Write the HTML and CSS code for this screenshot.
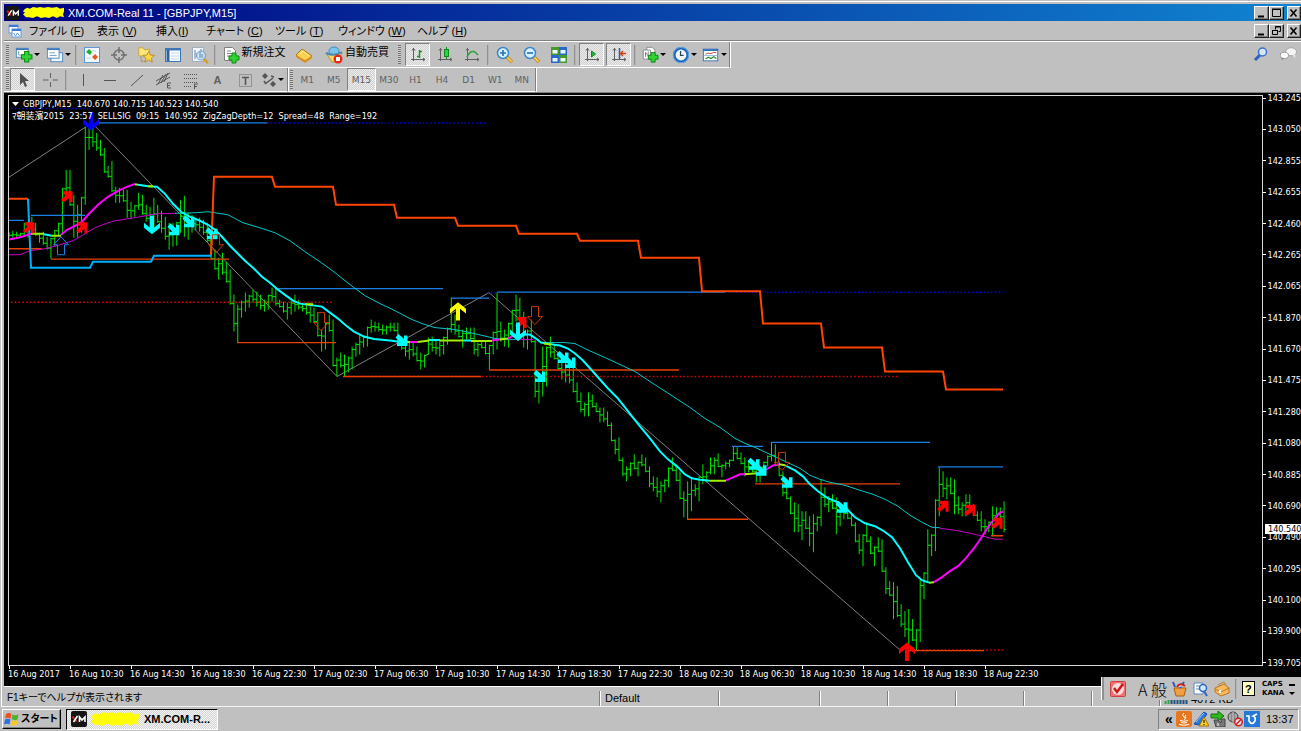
FILE: index.html
```html
<!DOCTYPE html>
<html lang="ja">
<head>
<meta charset="utf-8">
<title>XM.COM-Real 11 - [GBPJPY,M15]</title>
<link rel="stylesheet" href="styles.css">
</head>
<body>
<svg class="defs" width="0" height="0" aria-hidden="true">
  <defs>
    <symbol id="xm" viewBox="0 0 16 16"><rect x="0" y="0" width="16" height="16" rx="2" fill="#151515"/><path d="M1.500 5.500l4 5" stroke="#e02020" stroke-width="2"/><path d="M6.500 5L2.500 11M8.500 11V6l2.500 3 3-3v5" stroke="#fff" stroke-width="1.600" fill="none"/></symbol>
    <symbol id="scribble" viewBox="0 0 42 14" preserveAspectRatio="none"><path d="M1 4l3-2 3 1 3-2 4 1 3-1 4 1 4-1 4 1 5-1 3 2 4-1v4l-1 3 1 3-4-1-3 2-4-2-4 2-4-1-4 1-4-2-4 2-4-1-3 0-3-3 2-2-2-1z" fill="#ff0"/></symbol>
    <symbol id="plus" viewBox="0 0 12 12"><path d="M4 1h4v3h3v4H8v3H4V8H1V4h3z" fill="#2fd42f" stroke="#0a8a14"/></symbol>
    <symbol id="axes" viewBox="0 0 16 16"><path d="M3.500 1v13M1 12.500h14M2 3.500l1.500-2 1.500 2M13 11l2 1.500-2 1.500" stroke="#606060" fill="none"/></symbol>
    <symbol id="lens" viewBox="0 0 18 18"><path d="M11 11l5 5" stroke="#c89020" stroke-width="3.500"/><path d="M11 11l4.500 4.500" stroke="#ffd860" stroke-width="1.500"/><circle cx="7" cy="7" r="5.500" fill="#d8f0ff" stroke="#3c86c8" stroke-width="1.500"/></symbol>
  </defs>
</svg>

<div class="window">
  <header class="titlebar">
    <svg class="i14"><use href="#xm"/></svg>
    <svg class="mask"><use href="#scribble"/></svg>
    <h1 class="title">XM.COM-Real 11 - [GBPJPY,M15]</h1>
    <div class="winbtns">
      <button aria-label="最小化"><svg class="glyph" viewBox="0 0 10 10"><path d="M1 8.500h6" stroke="#000" stroke-width="2"/></svg></button>
      <button aria-label="最大化"><svg class="glyph" viewBox="0 0 10 10"><path d="M.5 1.500h8v7h-8zM0 1h9" stroke="#000" fill="none"/></svg></button>
      <button aria-label="閉じる"><svg class="glyph" viewBox="0 0 10 10"><path d="M1.500 1.500l6 7m0-7l-6 7" stroke="#000" stroke-width="1.600"/></svg></button>
    </div>
  </header>

  <nav class="menubar">
    <svg class="i14 menuicon" viewBox="0 0 14 14"><rect x="1" y="1" width="9" height="8" fill="#fff" stroke="#6a9ae0"/><path d="M1 2h9" stroke="#3c78d8" stroke-width="2"/><rect x="4" y="5" width="9" height="8" fill="#fff" stroke="#6a9ae0"/><path d="M4 6h9" stroke="#3c78d8" stroke-width="2"/><path d="M5.500 9l2 3 2-3 2 3" stroke="#5aa0f0" fill="none"/></svg>
    <div class="menus">
      <button>ファイル (<u>F</u>)</button><button>表示 (<u>V</u>)</button><button>挿入(<u>I</u>)</button><button>チャート (<u>C</u>)</button><button>ツール (<u>T</u>)</button><button>ウィンドウ (<u>W</u>)</button><button>ヘルプ (<u>H</u>)</button>
    </div>
    <div class="winbtns">
      <button aria-label="チャートを最小化"><svg class="glyph" viewBox="0 0 10 10"><path d="M1 8.500h6" stroke="#000" stroke-width="2"/></svg></button>
      <button aria-label="元に戻す"><svg class="glyph" viewBox="0 0 10 10"><path d="M3.500 3.500v-3h5v5h-2M3 1h6M.5 4.500h5v4h-5zM0 4.500h6" stroke="#000" fill="none"/></svg></button>
      <button aria-label="チャートを閉じる"><svg class="glyph" viewBox="0 0 10 10"><path d="M1.500 1.500l6 7m0-7l-6 7" stroke="#000" stroke-width="1.600"/></svg></button>
    </div>
  </nav>

  <div class="row row1">
    <div class="toolbar bar1">
      <i class="grip"></i>
      <button class="tool drop" aria-label="新規チャート"><svg class="i20" viewBox="0 0 20 20"><rect x="1.500" y="2.500" width="13" height="10" fill="#fff" stroke="#4a86c0"/><path d="M1 3.500h14" stroke="#3c78c0" stroke-width="2"/><path d="M4 10V6M3 7l1-1 1 1M4 10h7" stroke="#7aa" fill="none"/><use href="#plus" x="6" y="5" width="14" height="14"/></svg></button>
      <button class="tool drop" aria-label="プロファイル"><svg class="i20" viewBox="0 0 20 20"><rect x="5.500" y="7.500" width="13" height="10" fill="#e8f4ff" stroke="#4a86c0"/><rect x="1.500" y="2.500" width="13" height="11" fill="#fff" stroke="#4a86c0"/><path d="M1 3.500h14" stroke="#3c78c0" stroke-width="2"/><path d="M4 7.500h6M4 10.500h8" stroke="#6a98c8"/></svg></button>
      <i class="sep tight"></i>
      <button class="tool" aria-label="気配値表示"><svg class="i18" viewBox="0 0 18 18"><rect x="1.500" y="1.500" width="15" height="15" fill="#f4faff" stroke="#5a9ad8"/><path d="M6 3l3 3-2 3-4-3z" fill="#1cae28"/><path d="M12 8l3 3-3 3-3-3z" fill="#e85818"/><path d="M9 5h4M4 12h4" stroke="#b8cce0"/></svg></button>
      <button class="tool" aria-label="データウィンドウ"><svg class="i18" viewBox="0 0 18 18"><circle cx="9" cy="9" r="5" fill="none" stroke="#707070" stroke-width="1.500"/><path d="M9 1v6M9 11v6M1 9h6M11 9h6" stroke="#707070" stroke-width="1.500"/></svg></button>
      <button class="tool" aria-label="ナビゲーター"><svg class="i20" viewBox="0 0 20 20"><path d="M2 2h5l1 2h6v7H2z" fill="#ffe680" stroke="#c8a030"/><path d="M4.500 12v5h5" stroke="#806020" stroke-dasharray="1 1" fill="none"/><path d="M13 6l2 4 4.500.5-3.500 3 1 4.500-4-2.500L9 18l1-4.500-3.500-3L11 10z" fill="#ffd848" stroke="#b88820"/></svg></button>
      <button class="tool" aria-label="ターミナル"><svg class="i18" viewBox="0 0 18 18"><rect x="1.500" y="2.500" width="15" height="13" fill="#fff" stroke="#3c78b8"/><path d="M2 3.500h14" stroke="#3c78b8" stroke-width="2"/><path d="M4 4v11" stroke="#2a62a8" stroke-width="3"/><path d="M7 7h8M7 10h8M7 13h8" stroke="#b8d8f8"/></svg></button>
      <button class="tool" aria-label="ストラテジーテスター"><svg class="i18" viewBox="0 0 18 18"><rect x="1.500" y="1.500" width="11" height="14" fill="#f4f8fc" stroke="#a0b0c0"/><path d="M4 4v9M6 7v4M10 3v4" stroke="#6080a0"/><path d="M13 13l4 4" stroke="#d8a020" stroke-width="2.500"/><circle cx="10" cy="9.500" r="4.500" fill="#c8e4f8" fill-opacity=".85" stroke="#6a9cc8"/><path d="M9 6v6M11 8v4" stroke="#6080a0"/></svg></button>
      <i class="sep tight"></i>
      <button class="tool label neworder"><svg class="i18" viewBox="0 0 18 18"><path d="M2.500 1.500h8l3 3v10h-11z" fill="#fff" stroke="#808080"/><path d="M5 5h4M5 7.500h6M5 10h6" stroke="#888"/><use href="#plus" x="6" y="6" width="12" height="12"/></svg><span>新規注文</span></button>
      <button class="tool" aria-label="MetaEditor"><svg class="i18" viewBox="0 0 18 18"><path d="M1 9l6-6 10 7-7 6z" fill="#ffd050" stroke="#b07810"/><path d="M1 9l9 5 7-4v2l-7 5-9-6z" fill="#d89020"/><path d="M5 8l3-3 6 5" stroke="#fff0a0" fill="none"/></svg></button>
      <button class="tool label auto"><svg class="i18" viewBox="0 0 18 18"><ellipse cx="9" cy="5" rx="5" ry="4" fill="#7cc4ee" stroke="#3c8cc0"/><path d="M1 7q8 3 16 0l-5 9H7z" fill="#ffd860" stroke="#c09020"/><path d="M1 7q8 4 16-1" stroke="#3c8cc0" stroke-width="2" fill="none"/><circle cx="13" cy="13" r="4.500" fill="#e82818"/><rect x="11" y="11" width="4" height="4" fill="#fff"/></svg><span>自動売買</span></button>
      <i class="grip"></i>
      <button class="tool on" aria-label="バーチャート"><svg class="i16"><use href="#axes"/><path d="M9.500 3v8M7 9.500h2M10 4.500h2" stroke="#109820" stroke-width="1.500"/></svg></button>
      <button class="tool" aria-label="ローソク足"><svg class="i16"><use href="#axes"/><path d="M9.500 0v12" stroke="#108820"/><rect x="7.500" y="2.500" width="4" height="7" fill="#20d840" stroke="#108820"/></svg></button>
      <button class="tool" aria-label="ラインチャート"><svg class="i16"><use href="#axes"/><path d="M3 10q5-10 11-2" stroke="#30a040" stroke-width="1.500" fill="none"/></svg></button>
      <i class="sep"></i>
      <button class="tool" aria-label="ズームイン"><svg class="i18"><use href="#lens"/><path d="M4 7h6M7 4v6" stroke="#2870b8" stroke-width="1.600"/></svg></button>
      <button class="tool" aria-label="ズームアウト"><svg class="i18"><use href="#lens"/><path d="M4 7h6" stroke="#2870b8" stroke-width="1.600"/></svg></button>
      <button class="tool" aria-label="整列"><svg class="i18" viewBox="0 0 18 18"><path d="M1 1h8v8H1zM9 9h8v8H9z" fill="#48982c"/><path d="M9 1h8v8H9zM1 9h8v8H1z" fill="#2868c8"/><path d="M2.500 4h5v3.500h-5zM10.500 4h5v3.500h-5zM2.500 12h5v3.500h-5zM10.500 12h5v3.500h-5z" fill="#eef6ff"/></svg></button>
      <i class="sep"></i>
      <button class="tool on" aria-label="自動スクロール"><svg class="i16"><use href="#axes"/><path d="M7.500 4l4 3-4 3z" fill="#20b838" stroke="#108820"/></svg></button>
      <button class="tool on" aria-label="チャートシフト"><svg class="i16"><use href="#axes"/><path d="M8.500 1v11" stroke="#2060b0" stroke-width="1.500"/><path d="M15 6.500h-5M12 4l-2.500 2.500L12 9" stroke="#d04010" fill="none" stroke-width="1.500"/></svg></button>
      <i class="sep"></i>
      <button class="tool drop" aria-label="インディケータ"><svg class="i20" viewBox="0 0 20 20"><path d="M6.500 1.500h6l3 3v9h-9z" fill="#fff" stroke="#888"/><path d="M2.500 4.500h8v10h-8z" fill="#fff" stroke="#888"/><path d="M5 7v5M5 7l3 4M8 6v6" stroke="#777"/><use href="#plus" x="7" y="6" width="13" height="13"/></svg></button>
      <button class="tool drop" aria-label="時間設定"><svg class="i20" viewBox="0 0 20 20"><circle cx="10" cy="10" r="7.500" fill="#eef8ff" stroke="#1c66c0" stroke-width="3"/><circle cx="10" cy="10" r="8.500" fill="none" stroke="#60a8e8"/><path d="M9.500 5.500V10.500H13" stroke="#345" stroke-width="1.400" fill="none"/></svg></button>
      <button class="tool drop" aria-label="テンプレート"><svg class="i20" viewBox="0 0 20 20"><rect x="1.500" y="3.500" width="16" height="13" fill="#fff" stroke="#2c70b8"/><path d="M1 4.500h17" stroke="#2c70b8" stroke-width="2"/><path d="M2 10.500h15" stroke="#88b8e0"/><path d="M4 9l3-1 3 .5 3-1.500 3 .5" stroke="#c04020" fill="none"/><path d="M4 14.500l3-2 3 1.500 3-2 3 2" stroke="#209030" fill="none" stroke-width="1.300"/></svg></button>
    </div>
    <div class="rowend">
      <button class="tool" aria-label="検索"><svg class="i16" viewBox="0 0 16 16"><path d="M7 9l-5 5" stroke="#2c60c0" stroke-width="3"/><circle cx="9.500" cy="6" r="4" fill="#d8e8fc" stroke="#3c70d0" stroke-width="1.500"/></svg></button>
      <button class="tool" aria-label="チャット"><svg class="i20" viewBox="0 0 20 20"><ellipse cx="13.500" cy="7.500" rx="6" ry="4.500" fill="#f4f4f4" stroke="#a0a0a0"/><path d="M15 11l3 4v-5z" fill="#e8e8e8"/><ellipse cx="6" cy="11.500" rx="4.500" ry="3.500" fill="#fff" stroke="#909090"/><path d="M3 14v3l3-2z" fill="#888"/></svg></button>
    </div>
  </div>

  <div class="row row2">
    <div class="toolbar bar2">
      <i class="grip"></i>
      <button class="tool on" aria-label="カーソル"><svg class="i16" viewBox="0 0 16 16"><path d="M5 1v12l3-3 2 5 2-1-2-5h4z" fill="#505050"/></svg></button>
      <button class="tool" aria-label="十字カーソル"><svg class="i16" viewBox="0 0 16 16"><path d="M8.500 1v5M8.500 10v5M1 8h5.500M10.500 8H16" stroke="#606060"/></svg></button>
      <i class="sep"></i>
      <button class="tool" aria-label="垂直線"><svg class="i16" viewBox="0 0 16 16"><path d="M8.500 2v12" stroke="#555"/></svg></button>
      <button class="tool" aria-label="水平線"><svg class="i16" viewBox="0 0 16 16"><path d="M2 8.500h12" stroke="#555"/></svg></button>
      <button class="tool" aria-label="トレンドライン"><svg class="i16" viewBox="0 0 16 16"><path d="M2 14L14 3" stroke="#555"/></svg></button>
      <button class="tool" aria-label="チャネル"><svg class="i18" viewBox="0 0 18 18"><path d="M1 10L15 2M1 14L15 6M3 13L8 4M6 12l5-9M9 11l4-9" stroke="#555"/><path d="M16 12h-3.500v5H16M12.500 14.500H15" stroke="#555" fill="none"/></svg></button>
      <button class="tool" aria-label="フィボナッチ"><svg class="i18" viewBox="0 0 18 18"><path d="M2 3.500h14M2 7.500h14M2 11.500h14" stroke="#555" stroke-dasharray="1 1"/><path d="M2 15.500h8" stroke="#555" stroke-dasharray="1 1"/><path d="M16 13h-3.500v5M12.500 15.500H15" stroke="#555" fill="none"/></svg></button>
      <button class="tool letter" aria-label="テキスト">A</button>
      <button class="tool" aria-label="テキストラベル"><svg class="i16" viewBox="0 0 16 16"><rect x="2.500" y="2.500" width="12" height="12" fill="none" stroke="#666" stroke-dasharray="1 1"/><path d="M5 5.500h7M8.500 5v8" stroke="#555" stroke-width="1.600"/></svg></button>
      <button class="tool drop" aria-label="矢印"><svg class="i16" viewBox="0 0 16 16"><path d="M4 1l3 3-3 3-3-3zM12 9l3 3-3 3-3-3z" fill="#555"/><path d="M4 12l8-6M3 9l2 3M10 4l3 1" stroke="#555" stroke-width="1.500"/></svg></button>
    </div>
    <div class="toolbar bar3">
      <i class="grip"></i>
      <button>M1</button><button>M5</button><button class="on">M15</button><button>M30</button><button>H1</button><button>H4</button><button>D1</button><button>W1</button><button>MN</button>
    </div>
  </div>

  <main class="chart">
    <section class="plot">
      <svg class="canvas" viewBox="9 96 1253 570" preserveAspectRatio="none" role="img" aria-label="GBPJPY,M15">
        <defs>
          <path id="down" d="M-2-17H2V-5L8-10V-5L0 1.500L-8-5V-10L-2-5Z"/>
          <path id="up" d="M-2 17H2V5L8 10V5L0-1.500L-8 5V10L-2 5Z"/>
          <path id="ne" d="M-4-5.500H5.500V5.500H2.500V1L-3 5.500L-6 3L-1-2H-4Z"/>
          <path id="se" d="M-3.500-6.500L2-1.500V-5H5.500V5.500H-5V2H-1.500L-6.500-3Z"/>
          <path id="hollow" d="M-3.500-18H3.500V-8H7.500L0 0L-7.500-8H-3.500Z"/>
        </defs>
        <g class="zig"><polyline points="8,178 92,123 337,377 489,293 900,651"/></g>
        <path id="bars" class="bars"/>
        <path class="dot blue" d="M11 108.500H89M267 123H487M487 293H497M725 292.500H1003"/>
        <path class="dot red" d="M11 302.500H333M345 377H898M918 651H1003"/>
        <path class="res" d="M8 220.500H24M31 215.500H85M97 123H267M277 289H443M451 298.500H489M497 292.500H725M732 447H763M771 443H930M938 467.500H1003"/>
        <path class="sup" d="M8 249H42M51 259.500H229M237 343H336M343 377H481M489 370.500H679M687 520H748M755 484.500H900M908 651.500H984M991 536.500H1003"/>
        <path class="slow mg" d="M8 255L20 255 30 251 45 249 60 245 73 241 85 234 95 228 105 224 115 221 128 219 140 217 150 215 158 214 175 213.500M515 340H533M940 529L955 531 970 534 983 537 995 540 1003 540"/>
        <path class="slow cy" d="M175 213.500L195 213 208 212 215 213 228 215 243 223 260 228 275 233 290 241 305 252 320 262 335 273 350 285 365 296 380 304 395 311 410 319 422 324 435 328 455 330 470 333 483 336 495 339 515 340M541 343L565 343 575 344 587 350 605 358 620 365 635 372 650 382 670 395 690 408 705 419 720 428 735 439 745 444 755 448 770 455 785 462 800 469 810 476 820 480 830 483 845 486 860 491 873 495 885 500 898 507 910 516 922 523 932 528 940 528.500"/>
        <path class="step or" d="M8 199H28M211 256L214 177H272L275 187H333L336 205H394L397 218H455L458 226H516L519 234H577L580 241H638L641 258H699L702 291.500H760L763 324H821L824 348H882L885 372H943L946 390H1003"/>
        <path class="step bl" d="M28 199L31 268H90L93 262H151L154 256H211"/>
        <path class="fast cy" d="M44 234.500L52 236M138 185L148 186.500 157 187 165 194 173 204 181 212 190 217 200 221 208 225 215 230 222 237 230 246 240 256 245 261 253 268 262 277 270 283 278 290 286 296 293 301 300 304 322 307 338 319 346 326 354 332 364 337 374 339.500 390 341 405 343M429 340.500H440M463 341H471M518 336L524 335 530 335 536 339 541 343 553 345 560 346 568 349 575 354 583 361 592 371 600 380 608 389 617 398 625 408 632 417 640 427 650 439 660 452 668 460 677 467 685 475 692 479 700 480.500 710 481.500M785 466L795 471 803 477 810 485 818 492 828 499 838 503 846 509 855 518 865 524 875 527 884 532 892 538 900 549 908 563 916 576 922 581 929 583.500"/>
        <path class="fast mg" d="M8 240L18 238 25 236 31 234M61 235L67 230 73 227 82 222 90 213 98 205 108 197 118 191 127 187 135 184M410 342.500H418M492 341L500 340M508 339L515 335M726 481L733 478 740 475 745 475M757 474L765 471 773 466 779 465M934 583L942 578 950 572 958 567 966 559 974 549 981 539 988 528 994 520 999 514 1003 512"/>
        <path class="fast gr" d="M31 234H44M52 236H61M135 184.500L138 185M148 186.500H153M305 304.500H313M404 342.500H410M418 342.500L429 341M440 341H463M471 341.500H492M500 340L508 339M544 344L551 345M710 481.500H726M745 475L757 474M779 465L785 466M929 583.500L934 583"/>
        <g fill="#0000ff"><use href="#down" x="91" y="129"/></g>
        <g fill="#ffff00"><use href="#up" x="458" y="304"/></g>
        <g fill="#ff0000">
          <use href="#up" x="907" y="645"/>
          <use href="#ne" x="29" y="228"/><use href="#ne" x="67" y="197"/><use href="#ne" x="82" y="228"/><use href="#ne" x="521" y="323"/><use href="#ne" x="943" y="507"/><use href="#ne" x="970" y="511"/><use href="#ne" x="997" y="524"/>
        </g>
        <g fill="#00ffff">
          <use href="#down" x="152" y="233"/><use href="#down" x="518" y="340"/>
          <use href="#se" x="174" y="230"/><use href="#se" x="189" y="222"/><use href="#se" x="212" y="234"/><use href="#se" x="402" y="341"/><use href="#se" x="540" y="377"/><use href="#se" x="563" y="358"/><use href="#se" x="570" y="363"/><use href="#se" x="754" y="465"/><use href="#se" x="761" y="471"/><use href="#se" x="787" y="483"/><use href="#se" x="842" y="508"/>
        </g>
        <g class="open"><use href="#hollow" x="216" y="253"/><use href="#hollow" x="321" y="331"/><use href="#hollow" x="535" y="325"/><use href="#hollow" x="782" y="471"/></g>
        <g class="openup"><use href="#hollow" transform="translate(61 237) scale(1 -1)"/></g>
      </svg>
      <div class="caption">
        <p><svg class="tri" viewBox="0 0 7 4"><path d="M0 0h7L3.500 4z" fill="#fff"/></svg>GBPJPY,M15&nbsp; 140.670 140.715 140.523 140.540</p>
        <p class="signal">ﾏ朝装濱2015&nbsp; 23:57&nbsp; SELLSIG&nbsp; 09:15&nbsp; 140.952&nbsp; ZigZagDepth=12&nbsp; Spread=48&nbsp; Range=192</p>
      </div>
    </section>
    <ol class="prices">
      <li>143.245</li><li>143.050</li><li>142.855</li><li>142.655</li><li>142.460</li><li>142.265</li><li>142.065</li><li>141.870</li><li>141.670</li><li>141.475</li><li>141.280</li><li>141.080</li><li>140.885</li><li>140.690</li><li>140.490</li><li>140.295</li><li>140.100</li><li>139.900</li><li>139.705</li>
      <li class="last">140.540</li>
    </ol>
    <ol class="times">
      <li>16 Aug 2017</li><li>16 Aug 10:30</li><li>16 Aug 14:30</li><li>16 Aug 18:30</li><li>16 Aug 22:30</li><li>17 Aug 02:30</li><li>17 Aug 06:30</li><li>17 Aug 10:30</li><li>17 Aug 14:30</li><li>17 Aug 18:30</li><li>17 Aug 22:30</li><li>18 Aug 02:30</li><li>18 Aug 06:30</li><li>18 Aug 10:30</li><li>18 Aug 14:30</li><li>18 Aug 18:30</li><li>18 Aug 22:30</li>
    </ol>
  </main>

  <footer class="status">
    <span class="help">F1キーでヘルプが表示されます</span>
    <span class="profile">Default</span>
    <span class="w100"></span><span class="w68"></span><span class="w68"></span><span class="w68"></span><span class="w68"></span><span class="w68"></span>
    <span class="net"><svg class="signalbars" viewBox="0 0 24 10"><path d="M1.500 7v3M4.500 6v4" stroke="#30a050" stroke-width="2"/><path d="M7.500 5v5M10.500 4v6M13.500 3v7M16.500 2v8M19.500 1v9M22.500 0v10" stroke="#205080" stroke-width="2"/></svg>4072 KB</span>
  </footer>
</div>

<div class="taskbar">
  <button class="start"><svg class="i16" viewBox="0 0 16 16"><path d="M2 3q3-2 5.500 0L6.500 7.500Q4 6 1 7.500z" fill="#f05020"/><path d="M8.500 3.500q3 1.500 6 0l-1 5q-3 1.500-6-.5z" fill="#50b030"/><path d="M1 8.500q3-1.500 5.500 0l-1 5Q3 12 0 13.500z" fill="#3070e0"/><path d="M7.500 9q3 1.500 6 .5l-1 4.500q-3 1.500-6-.5z" fill="#f8c820"/></svg>スタート</button>
  <button class="task"><svg class="i16"><use href="#xm"/></svg><svg class="mask big"><use href="#scribble"/></svg><span>XM.COM-R...</span></button>
  <div class="tray">
    <button class="more" aria-label="隠れているアイコン">«</button>
    <svg class="i16" viewBox="0 0 16 16"><rect width="16" height="16" rx="2" fill="#e87820"/><path d="M8 2q-3 2 0 4t0 3M10 4q-2 1 0 3M4 9.500q4 1.500 8 0M5 11.500q3 1 6 0M3 13.500q5 1.500 10 0" stroke="#fff" fill="none"/></svg>
    <svg class="i16" viewBox="0 0 16 16"><path d="M1 13L11 1l3 2L6 14z" fill="#2878e0" stroke="#1048a0"/><path d="M3 11l8-9" stroke="#a0d0ff"/><path d="M11 6l5 9H6z" fill="#ffd020" stroke="#a07000"/><path d="M11 9v3M11 13v1" stroke="#000"/></svg>
    <svg class="i16" viewBox="0 0 16 16"><path d="M1 3h7V0l6 5-6 5V7H1z" fill="#30b820" stroke="#107010"/><path d="M4 9h4l3 3v-4h4v8H6z" fill="#777" stroke="#444"/><path d="M8 15v-3" stroke="#fff"/></svg>
    <svg class="i16" viewBox="0 0 16 16"><circle cx="6" cy="6" r="5" fill="#888" stroke="#444"/><path d="M6 1v10M3 3v6M9 3v6" stroke="#ccc"/><circle cx="11.500" cy="11" r="3.800" fill="#ddd" stroke="#d02020" stroke-width="1.500"/><path d="M9 13.500l5-5" stroke="#d02020" stroke-width="1.500"/></svg>
    <svg class="i16" viewBox="0 0 16 16"><rect width="16" height="16" fill="#2478d8"/><path d="M2 5h3v5q3 5 6 0 1-4-2-5l4-2" stroke="#fff" stroke-width="1.600" fill="none"/></svg>
    <time>13:37</time>
  </div>
</div>

<aside class="langbar">
  <svg class="i16" viewBox="0 0 16 16"><rect x=".5" y=".5" width="15" height="15" rx="1" fill="#f07070" stroke="#d04040"/><circle cx="8" cy="8" r="6" fill="#fbdcdc"/><path d="M4 7l3 4 6-8" stroke="#c81818" stroke-width="2.500" fill="none"/></svg>
  <span class="mode">A 般</span>
  <svg class="i16" viewBox="0 0 16 16"><path d="M2 7h12l-2 8H4z" fill="#f0a040" stroke="#a86010"/><path d="M3 6L1 1M8 7l4-6" stroke="#2858c0" stroke-width="2"/><path d="M5 6q3-5 8-1" stroke="#c02020" stroke-width="2" fill="#fff"/></svg>
  <svg class="i16" viewBox="0 0 16 16"><path d="M1 2h9v11H1z" fill="#fff" stroke="#5a88c8"/><path d="M3 5h4M3 8h4" stroke="#5a88c8"/><circle cx="10" cy="7" r="3.500" fill="#d0e8ff" stroke="#3068b8" stroke-width="1.500"/><path d="M11 10l3 5" stroke="#3068b8" stroke-width="2"/></svg>
  <svg class="i16" viewBox="0 0 16 16"><path d="M1 7l9-4 5 4v5l-8 3-6-4z" fill="#f8b860" stroke="#b87820"/><path d="M1 8l6 3 8-4" stroke="#b87820" fill="none"/><path d="M5 5V3l5-2 2 3" stroke="#c88830" fill="none"/><path d="M6 9v3" stroke="#fff" stroke-width="2"/></svg>
  <i class="sep"></i>
  <button class="qmark" aria-label="ヘルプ">?</button>
  <span class="caps">CAPS<br>KANA</span>
  <svg class="langend" viewBox="0 0 6 16"><path d="M0 4h6" stroke="#000" stroke-width="2"/><path d="M0 11h6l-3 3z"/></svg>
</aside>
<script src="chart.js"></script>
</body>
</html>
```
FILE: styles.css
```css
* { box-sizing: border-box; }
html, body { height: 100%; }
body {
  margin: 0;
  display: flex;
  flex-direction: column;
  background: #c0c0c0;
  color: #000;
  font: 11px/14px "Liberation Sans", "Noto Sans CJK JP", sans-serif;
  font-feature-settings: "palt";
  overflow: hidden;
  position: relative;
}
p, h1, ol { margin: 0; padding: 0; }
ol { list-style: none; }
.defs { position: absolute; }
button {
  appearance: none;
  border: 0;
  padding: 0;
  margin: 0;
  background: none;
  color: inherit;
  font: inherit;
  font-feature-settings: inherit;
  white-space: nowrap;
}
svg { display: block; flex: none; }
.i14 { width: 14px; height: 14px; }
.i16 { width: 16px; height: 16px; }
.i18 { width: 18px; height: 18px; }
.i20 { width: 18px; height: 18px; }

.window {
  flex: 1;
  min-height: 0;
  display: flex;
  flex-direction: column;
  margin-top: 1px;
  margin-left: 1px;
  padding: 2px 0 0 2px;
  border-top: 1px solid #fff;
  border-left: 1px solid #fff;
  border-bottom: 1px solid #f4f4f4;
}
.titlebar {
  height: 17px;
  display: flex;
  align-items: center;
  padding-left: 2px;
  background: linear-gradient(90deg, #000080, #1084d0);
  color: #fff;
}
.mask { width: 42px; height: 13px; margin-left: 3px; }
.title { font-size: 11px; font-weight: 400; margin-left: 3px; flex: 1; }
.winbtns { display: flex; margin-left: auto; }
.winbtns button {
  width: 15px;
  height: 14px;
  background: #c0c0c0;
  border: 1px solid;
  border-color: #fff #202020 #202020 #fff;
  box-shadow: inset -1px -1px #808080;
  display: grid;
  place-items: center;
}
.winbtns button:last-child { margin-left: 3px; width: 14px; }
.glyph { width: 10px; height: 10px; }

.menubar {
  height: 20px;
  display: flex;
  align-items: center;
  border-bottom: 1px solid #808080;
}
.menuicon { margin: 0 7px 0 4px; }
.menus { display: grid; grid-template-columns: 68px 59px 50px 69px 63px 79px auto; }
.menus button { text-align: left; }

.row { display: flex; justify-content: space-between; }
.row1 { height: 27px; border-top: 1px solid #fff; }
.row2 { height: 25px; justify-content: flex-start; border-bottom: 1px solid #808080; }
.toolbar {
  display: flex;
  align-items: center;
  border-right: 1px solid #808080;
  border-bottom: 1px solid #fff;
  box-shadow: 1px 0 #fff;
}
.grip {
  width: 3px;
  height: 19px;
  margin: 0 3px 0 2px;
  flex: none;
  background: repeating-linear-gradient(#707070 0 1px, #d0d0d0 1px 2px);
}
.sep { width: 2px; height: 20px; margin: 0 2px; flex: none; background: #909090; border-right: 1px solid #b4b4b4; }
.sep.tight { margin: 0 1px; }
.tool { width: 27px; height: 23px; display: flex; align-items: center; justify-content: center; flex: none; }
.drop { width: 31px; }
.drop::after { content: ""; border: 3px solid transparent; border-top-color: #000; border-bottom: 0; margin-left: 1px; }
.bar1 .drop:last-child { width: 29px; }
.on {
  border: 1px solid;
  border-color: #808080 #fff #fff #808080;
  background: repeating-conic-gradient(#ececec 0 25%, #d0d0d0 0 50%) 0 0 / 2px 2px;
}
.tool.on { width: 25px; margin: 0 1px; }
.label span { align-self: flex-start; margin: 2px 0 0 2px; }
.neworder { width: 73px; }
.auto { width: 76px; margin: 0 1px 0 2px; }
.rowend { display: flex; }
.letter { font: bold 11px/14px "Liberation Sans", sans-serif; color: #606060; }
.bar2 .grip { margin-right: 0; }
.bar2 .drop { width: 29px; }
.bar3 .grip { margin-right: 1px; }
.bar3 { width: 248px; }
.bar3 button { flex: 1; height: 23px; color: #606060; font: 9px/14px "DejaVu Sans", sans-serif; }

.chart {
  flex: 1;
  min-height: 0;
  display: grid;
  grid-template: minmax(0, 1fr) 18px / minmax(0, 1fr) 38px;
  background: #000;
  color: #fff;
  font: 9px/10px "DejaVu Sans Condensed", "DejaVu Sans", sans-serif;
}
.plot {
  margin: 2px 0 2px 4px;
  border: 1px solid #d8d8d8;
  position: relative;
}
.canvas { width: 100%; height: 100%; overflow: hidden; fill: none; }
.caption { position: absolute; left: 3px; top: 2px; white-space: nowrap; }
.caption p { display: flex; align-items: center; height: 12px; }
.caption .signal { font-family: "DejaVu Sans Condensed", "Noto Sans CJK JP", sans-serif; }
.tri { width: 7px; height: 4px; margin-right: 4px; }
.prices { display: flex; flex-direction: column; justify-content: space-between; position: relative; }
.prices li { display: flex; align-items: center; }
.prices li::before { content: ""; width: 3px; height: 1px; margin-right: 2px; background: #fff; }
.prices .last { position: absolute; left: 2px; right: 0; top: 75%; padding-left: 3px; background: #fff; color: #000; }
.prices .last::before { display: none; }
.times { grid-column: 1; margin-left: 4px; display: grid; grid-template-columns: repeat(17, 4.86%); }
.times li { white-space: nowrap; position: relative; padding-top: 1px; }
.times li::before { content: ""; position: absolute; left: 1px; top: -2px; width: 1px; height: 3px; background: #fff; }

.bars { stroke: #00e800; }
.zig { stroke: #808080; stroke-width: 1; }
.dot { stroke-dasharray: 1.500 2.300; stroke-width: 1.500; }
.dot.blue { stroke: #0000e8; }
.dot.red { stroke: #e80000; }
.res { stroke: #1a80e8; stroke-width: 1.300; }
.sup { stroke: #e84000; stroke-width: 1.300; }
.slow { stroke-width: 1; }
.slow.cy { stroke: #00c8c8; }
.slow.mg { stroke: #c800c8; }
.step { stroke-width: 2; }
.step.or { stroke: #ff4500; }
.step.bl { stroke: #00b0ff; }
.fast { stroke-width: 2; }
.fast.cy { stroke: #00ffff; }
.fast.mg { stroke: #ff00ff; }
.fast.gr { stroke: #a0f000; }
.open { stroke: #c83c00; }
.openup { stroke: #1e80e8; }

.status { height: 20px; display: flex; align-items: stretch; border-top: 1px solid #fff; }
.status span { margin-top: 4px; border-left: 1px solid #808080; box-shadow: inset 1px 0 #fff; }
.status .help { flex: 1; border: 0; box-shadow: none; padding-left: 3px; font-size: 10px; }
.status .profile { width: 119px; padding-left: 5px; }
.status .w100 { width: 101px; }
.status .w68 { width: 68px; }
.status .net { width: 142px; display: flex; align-items: center; padding-left: 4px; gap: 3px; }
.signalbars { width: 24px; height: 10px; }

.taskbar { height: 24px; display: flex; align-items: center; padding: 0 2px; gap: 5px; }
.start {
  width: 59px;
  height: 20px;
  display: flex;
  align-items: center;
  gap: 1px;
  padding-left: 1px;
  font-size: 10px;
  font-weight: 700;
  border: 1px solid;
  border-color: #fff #000 #000 #fff;
  box-shadow: inset -1px -1px #808080;
}
.task {
  width: 152px;
  height: 21px;
  display: flex;
  align-items: center;
  padding-left: 4px;
  font-weight: 700;
  border: 1px solid;
  border-color: #000 #fff #fff #000;
  background: repeating-conic-gradient(#f4f4f4 0 25%, #d4d4d4 0 50%) 0 0 / 2px 2px;
}
.big { width: 49px; height: 16px; margin: 0 4px; }
.tray {
  margin-left: auto;
  width: 141px;
  height: 21px;
  display: flex;
  align-items: center;
  gap: 1px;
  padding-left: 4px;
  border: 1px solid;
  border-color: #808080 #fff #fff #808080;
}
.more { width: 12px; font-size: 14px; font-weight: 700; }
.tray time { margin-left: 5px; }

.langbar {
  position: absolute;
  right: 0;
  bottom: 31px;
  width: 200px;
  height: 23px;
  display: flex;
  align-items: center;
  gap: 5px;
  padding-left: 8px;
  background: #c0c0c0;
  border-left: 1px solid #fff;
  box-shadow: inset 2px 0 #909090;
}
.mode { font: 16px/20px "Noto Sans CJK JP", sans-serif; font-weight: 300; margin-left: 7px; white-space: nowrap; }
.langbar .sep { margin: 0; }
.qmark { width: 13px; height: 15px; background: #ffffc0; border: 1px solid #000; font-weight: 700; }
.caps { font: bold 7px/9px "DejaVu Sans", sans-serif; margin-left: 2px; }
.langend { width: 6px; height: 16px; }
```
FILE: chart.js
```javascript
// High and low of each 15-minute bar, as vertical positions on the canvas.
const bars = [
  232,238, 231,240, 232,238, 233,238, 223,237, 222,238, 217,233, 223,236, 233,243, 232,245,
  237,250, 238,259, 230,246, 223,236, 188,235, 170,200, 170,206, 195,238, 205,238, 197,233,
  127,205, 125,150, 128,147, 133,151, 140,156, 148,173, 166,178, 161,192, 187,203, 188,203,
  190,202, 190,218, 202,219, 205,217, 193,210, 195,215, 205,222, 207,230, 198,232, 205,223,
  211,233, 217,240, 223,250, 223,247, 222,246, 200,233, 196,237, 213,240, 215,233, 218,230,
  218,232, 220,235, 223,242, 233,260, 250,270, 258,280, 253,275, 262,283, 270,305, 295,332,
  305,343, 301,318, 293,312, 295,308, 290,303, 292,307, 295,310, 300,312, 295,310, 288,302,
  288,306, 300,308, 302,313, 303,320, 301,315, 295,312, 300,310, 303,312, 303,315, 303,323,
  308,323, 313,337, 330,352, 323,350, 315,332, 320,367, 358,377, 353,368, 355,377, 357,373,
  347,370, 343,357, 335,355, 337,348, 327,347, 320,333, 322,332, 323,332, 325,335, 326,335,
  323,332, 323,332, 323,342, 337,350, 340,357, 343,360, 343,357, 347,362, 353,370, 355,368,
  338,355, 337,352, 341,355, 340,357, 337,355, 328,345, 298,333, 315,335, 325,338, 330,348,
  328,340, 328,340, 328,355, 343,357, 341,349, 341,355, 345,370, 332,355, 293,350, 322,342,
  330,347, 323,348, 310,337, 295,322, 298,323, 312,348, 330,350, 320,343, 340,398, 380,404,
  347,397, 347,387, 337,358, 345,360, 352,370, 358,380, 362,383, 367,384, 368,393, 383,403,
  393,413, 403,417, 393,417, 395,408, 403,413, 408,423, 408,423, 412,427, 423,442, 440,455,
  438,462, 458,477, 467,482, 463,477, 455,470, 462,477, 455,467, 458,473, 467,488, 477,492,
  478,498, 482,503, 480,493, 468,488, 458,472, 465,482, 472,500, 492,518, 482,520, 478,512,
  485,497, 477,502, 465,485, 472,483, 458,475, 458,475, 454,468, 465,478, 462,470, 460,468,
  447,462, 448,460, 453,465, 458,477, 462,473, 463,473, 465,483, 467,483, 462,474, 456,467,
  443,462, 445,467, 462,477, 472,497, 487,500, 497,515, 503,533, 505,533, 512,541, 512,530,
  517,547, 515,553, 517,532, 480,527, 488,508, 497,513, 495,510, 498,535, 508,527, 503,520,
  508,520, 513,527, 523,543, 535,555, 535,567, 523,543, 537,555, 547,567, 538,553, 540,573,
  568,595, 582,597, 583,620, 587,618, 605,628, 612,638, 610,650, 620,642, 630,652, 580,643,
  573,600, 530,583, 535,557, 500,552, 468,517, 472,498, 478,500, 478,495, 480,515, 497,515,
  503,517, 495,517, 495,512, 505,517, 512,522, 512,532, 520,535, 522,533, 507,537, 508,525,
  508,523, 502,533
];

const START = 9;
const STEP = 61 / 16;
const count = bars.length / 2;
let previousClose = 236;
let path = "";

for (let i = 0; i < count; i++) {
  const x = START + i * STEP;
  const high = bars[2 * i];
  const low = bars[2 * i + 1];
  const next = i + 1 < count ? (bars[2 * i + 2] + bars[2 * i + 3]) / 2 : 530;
  const open = Math.min(Math.max(previousClose, high), low);
  const close = Math.min(Math.max(next, high + 1), low - 1);
  path += `M${x} ${high}V${low}M${x - 2} ${open}H${x}M${x} ${close}H${x + 2}`;
  previousClose = close;
}

document.getElementById("bars").setAttribute("d", path);
```
